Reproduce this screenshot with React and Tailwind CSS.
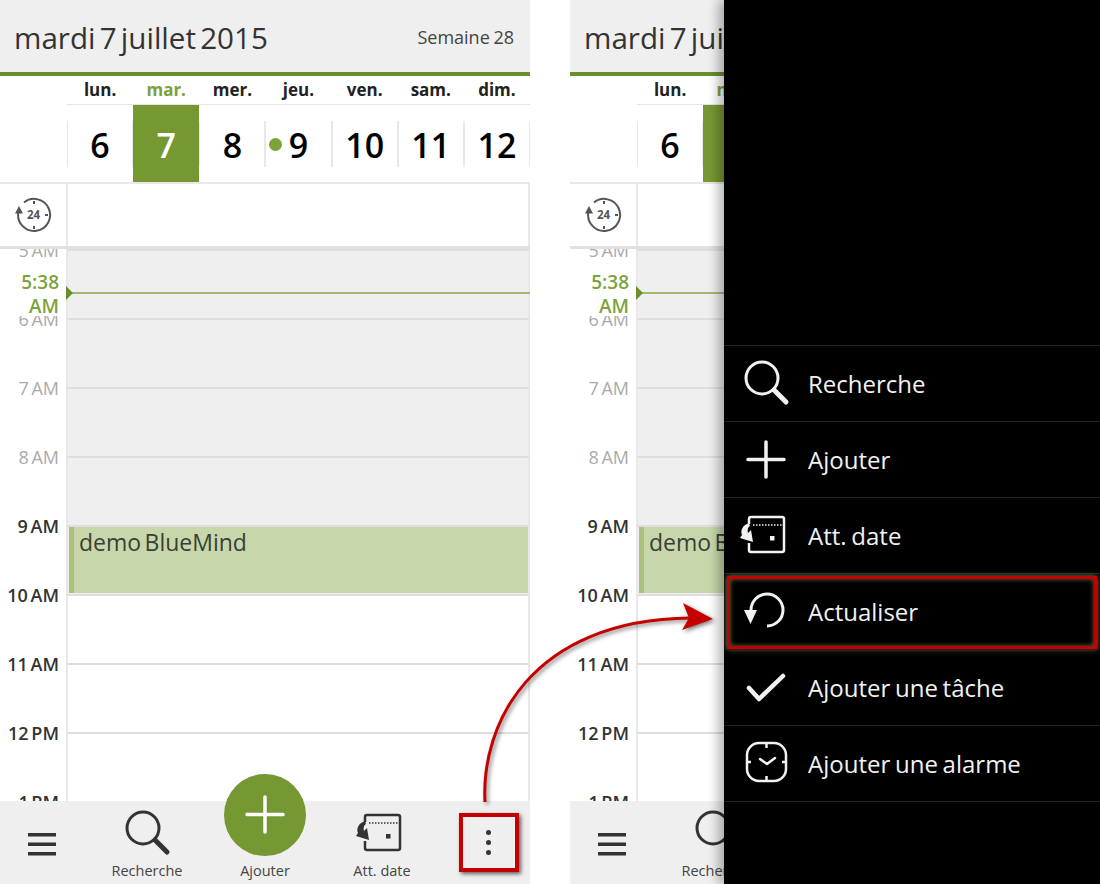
import React from 'react'

const days = [
  { name: 'lun.', num: '6' },
  { name: 'mar.', num: '7', today: true },
  { name: 'mer.', num: '8' },
  { name: 'jeu.', num: '9', dot: true },
  { name: 'ven.', num: '10' },
  { name: 'sam.', num: '11' },
  { name: 'dim.', num: '12' },
]

const hours = [
  { label: '5 AM', past: true },
  { label: '6 AM', past: true },
  { label: '7 AM', past: true },
  { label: '8 AM', past: true },
  { label: '9 AM', past: true, strong: true, event: true },
  { label: '10 AM', strong: true },
  { label: '11 AM', strong: true },
  { label: '12 PM', strong: true },
  { label: '1 PM', strong: true },
]

function SearchIcon() {
  return (
    <svg width="48" height="48" viewBox="0 0 48 48" fill="none" stroke="currentColor" className="overflow-visible">
      <circle cx="20" cy="18" r="16" strokeWidth="3" />
      <path d="M32 30 L44 42" strokeWidth="5" strokeLinecap="round" />
    </svg>
  )
}

function PlusIcon({ className }) {
  return (
    <svg width="48" height="48" viewBox="0 0 48 48" fill="none" stroke="currentColor" strokeWidth="3.5" strokeLinecap="round" className={className}>
      <path d="M24 6 V41 M6 23.5 H42" />
    </svg>
  )
}

function DateIcon() {
  return (
    <svg width="48" height="48" viewBox="0 0 48 48" fill="none" stroke="currentColor" className="overflow-visible">
      <path d="M7 12 V7 Q7 5 9 5 H40 Q42 5 42 7 V38 Q42 40 40 40 H9 Q7 40 7 38 V31" strokeWidth="2.5" />
      <path d="M11 13 H40" strokeWidth="1.5" strokeDasharray="1.5 1.5" />
      <rect x="28" y="24" width="4.5" height="4.5" fill="currentColor" stroke="none" />
      <path d="M7 11 C1 13 -2 18 0 23 L-2 26 L11 30 L9 18 L6 21 C5 18 6 15 8 14 Z" fill="currentColor" stroke="none" />
    </svg>
  )
}

function RefreshIcon() {
  return (
    <svg width="48" height="48" viewBox="0 0 48 48" fill="none" stroke="currentColor">
      <path d="M9 22 A16 16 0 1 1 25 38" strokeWidth="3" />
      <path d="M2 22 H15 L8.5 36 Z" fill="currentColor" stroke="none" />
    </svg>
  )
}

function CheckIcon() {
  return (
    <svg width="48" height="48" viewBox="0 0 48 48" fill="none" stroke="currentColor">
      <path d="M7 24 L17 35 L41 12" strokeWidth="4.5" strokeLinecap="round" strokeLinejoin="round" />
    </svg>
  )
}

function AlarmIcon() {
  return (
    <svg width="48" height="48" viewBox="0 0 48 48" fill="none" stroke="currentColor" strokeWidth="2.5">
      <rect x="5" y="3" width="39" height="38" rx="12" />
      <path d="M24.5 3 V8 M24.5 36 V41 M5 22 H9 M40 22 H44" />
      <path d="M18 19 L25 24 L33 18" strokeLinecap="round" strokeLinejoin="round" />
    </svg>
  )
}

function ClockIcon() {
  return (
    <svg width="40" height="40" viewBox="0 0 40 40" fill="none" stroke="#555" className="font-['Open_Sans',sans-serif]">
      <path d="M5.2 18 A16 16 0 1 0 11 7.5" strokeWidth="2" />
      <path d="M2 18.5 L6 11 L10 18.5 Z" fill="#555" stroke="none" />
      <path d="M21 6 V9 M21 31 V34 M32 20 H35" strokeWidth="2" />
      <text x="20.5" y="24" textAnchor="middle" fontSize="11.5" fontWeight="700" fill="#555" stroke="none">24</text>
    </svg>
  )
}

function Phone() {
  return (
    <div className="flex h-[884px] w-[530px] shrink-0 flex-col overflow-hidden bg-white">
      <div className="flex h-[76px] shrink-0 items-center justify-between border-b-4 border-[#6b8e2c] bg-[#efefef] pl-[14px] pr-[16px] pt-[4px]">
        <span className="text-[29.6px] leading-none text-[#333] [word-spacing:-3.5px]">mardi 7 juillet 2015</span>
        <span className="-mt-[2px] text-[18px] leading-none text-[#444] [word-spacing:-1px]">Semaine 28</span>
      </div>

      <div className="flex h-[29px] shrink-0 pl-[67px]">
        <div className="grid flex-1 grid-cols-7 border-b border-[#e5e5e5]">
          {days.map((d) => (
            <span
              key={d.name}
              className={`text-center text-[17px] font-bold leading-[28px] ${d.today ? 'text-[#7ba33a]' : 'text-[#222]'}`}
            >
              {d.name}
            </span>
          ))}
        </div>
      </div>

      <div className="flex h-[79px] shrink-0 border-b-2 border-[#e8e8e8] pl-[67px]">
        <div className="grid flex-1 grid-cols-7">
          {days.map((d) =>
            d.today ? (
              <div key={d.num} className="flex items-center justify-center bg-[#769833] pt-[3px] text-[34px] font-semibold text-white">
                {d.num}
              </div>
            ) : (
              <div key={d.num} className="flex items-center">
                <div className="relative flex h-[46px] w-full items-center justify-center border-x border-[#e8e8e8] pt-[3px] text-[34px] font-semibold text-black">
                  {d.dot && <span className="absolute left-[3px] top-[17px] h-[13px] w-[13px] rounded-full bg-[#7ba33a]" />}
                  {d.num}
                </div>
              </div>
            )
          )}
        </div>
      </div>

      <div className="flex h-[65px] shrink-0 border-b-[3px] border-[#e0e0e0]">
        <div className="flex w-[66px] shrink-0 items-center justify-center">
          <ClockIcon />
        </div>
        <div className="flex-1 border-x-2 border-[#e8e8e8]" />
      </div>

      <div className="relative min-h-0 flex-1 overflow-hidden">
        {hours.map((h) => (
          <div key={h.label} className="flex h-[69px]">
            <div className="w-[66px] shrink-0 pr-[7px] text-right">
              <div
                className={`-mt-[10px] text-[18px] leading-[22px] [word-spacing:-2px] ${h.strong ? 'font-semibold text-[#333]' : 'text-[#aaa]'}`}
              >
                {h.label}
              </div>
            </div>
            <div
              className={`flex-1 border-x-2 border-x-[#e8e8e8] border-t-2 border-t-[#dedede] ${h.past ? 'bg-[#efefef]' : 'bg-white'}`}
            >
              {h.event && (
                <div className="ml-[1px] h-[66px] border-l-[5px] border-[#a9c17c] bg-[#c8d7ab] pl-[5px] text-[23px] leading-[30px] text-[#3a3f35] [word-spacing:-2.5px]">
                  demo BlueMind
                </div>
              )}
            </div>
          </div>
        ))}

        <div className="absolute left-0 top-[21px] h-[46px] w-[66px] bg-white pr-[7px] text-right text-[19px] font-semibold leading-[24px] text-[#7ba33a]">
          5:38
          <br />
          AM
        </div>
        <div className="absolute left-[66px] right-0 top-[43px] h-[2px] bg-[#a0bb70]" />
        <div className="absolute left-[66px] top-[37px] h-0 w-0 border-y-[7px] border-l-[7px] border-y-transparent border-l-[#6b8e2c]" />
      </div>

      <div className="flex h-[83px] shrink-0 bg-[#efefef] text-[14.5px] text-[#444]">
        <div className="flex w-[84px] items-center justify-center pt-[4px]">
          <svg width="28" height="24" viewBox="0 0 28 24" fill="#333">
            <rect y="0" width="28" height="3.5" />
            <rect y="9.5" width="28" height="3.5" />
            <rect y="19" width="28" height="3.5" />
          </svg>
        </div>
        <div className="flex w-[126px] flex-col items-center pt-[9px] text-[#333]">
          <SearchIcon />
          <span className="mt-[2px] leading-[22px] text-[#444]">Recherche</span>
        </div>
        <div className="relative flex w-[110px] flex-col items-center">
          <div className="-mt-[27px] flex h-[82px] w-[82px] items-center justify-center rounded-full bg-[#769833] text-white">
            <PlusIcon />
          </div>
          <span className="mt-[4px] leading-[22px]">Ajouter</span>
        </div>
        <div className="flex w-[124px] flex-col items-center pt-[9px] text-[#333]">
          <DateIcon />
          <span className="mt-[2px] leading-[22px] text-[#444]">Att. date</span>
        </div>
        <div className="flex w-[86px] flex-col items-center gap-[5px] pl-[2px] pt-[29px]">
          <span className="h-[5px] w-[5px] rounded-full bg-[#333]" />
          <span className="h-[5px] w-[5px] rounded-full bg-[#333]" />
          <span className="h-[5px] w-[5px] rounded-full bg-[#333]" />
        </div>
      </div>
    </div>
  )
}

function MenuRow({ icon, label, highlight }) {
  return (
    <div className="relative flex h-[76px] items-center gap-[18px] border-t border-[#222] pl-[18px] text-[24px] text-[#f2f2f2] [word-spacing:-1.5px]">
      {icon}
      <span>{label}</span>
      {highlight && (
        <div className="absolute inset-x-[3px] top-[2px] h-[73px] border-[3px] border-[#c40000] shadow-[0_0_5px_#8c8c5a,inset_0_0_5px_#6d6d45]" />
      )}
    </div>
  )
}

export default function App() {
  return (
    <div className="relative flex h-[884px] w-[1100px] gap-[40px] overflow-hidden bg-white font-['Open_Sans',sans-serif]">
      <Phone />

      <div className="relative w-[530px] shrink-0">
        <Phone />
        <div className="absolute inset-y-0 right-0 flex w-[376px] flex-col justify-end bg-black pb-[82px] shadow-[-6px_0_10px_rgba(0,0,0,0.28)]">
          <MenuRow icon={<SearchIcon />} label="Recherche" />
          <MenuRow icon={<PlusIcon />} label="Ajouter" />
          <MenuRow icon={<DateIcon />} label="Att. date" />
          <MenuRow icon={<RefreshIcon />} label="Actualiser" highlight />
          <MenuRow icon={<CheckIcon />} label="Ajouter une tâche" />
          <MenuRow icon={<AlarmIcon />} label="Ajouter une alarme" />
          <div className="border-t border-[#222]" />
        </div>
      </div>

      {/* annotations */}
      <div className="absolute left-[459px] top-[813px] h-[59px] w-[60px] border-4 border-[#c40000] shadow-[2px_2px_4px_rgba(0,0,0,0.6)]" />
      <svg
        className="absolute left-[470px] top-[590px] drop-shadow-[2px_2px_2px_rgba(0,0,0,0.5)]"
        width="260"
        height="220"
        viewBox="470 590 260 220"
        fill="none"
      >
        <path d="M485 802 C481 725 530 620 690 618" stroke="#c40000" strokeWidth="3" />
        <path d="M683 603 L713 619 L682 630 L689 618 Z" fill="#c40000" />
      </svg>
    </div>
  )
}
